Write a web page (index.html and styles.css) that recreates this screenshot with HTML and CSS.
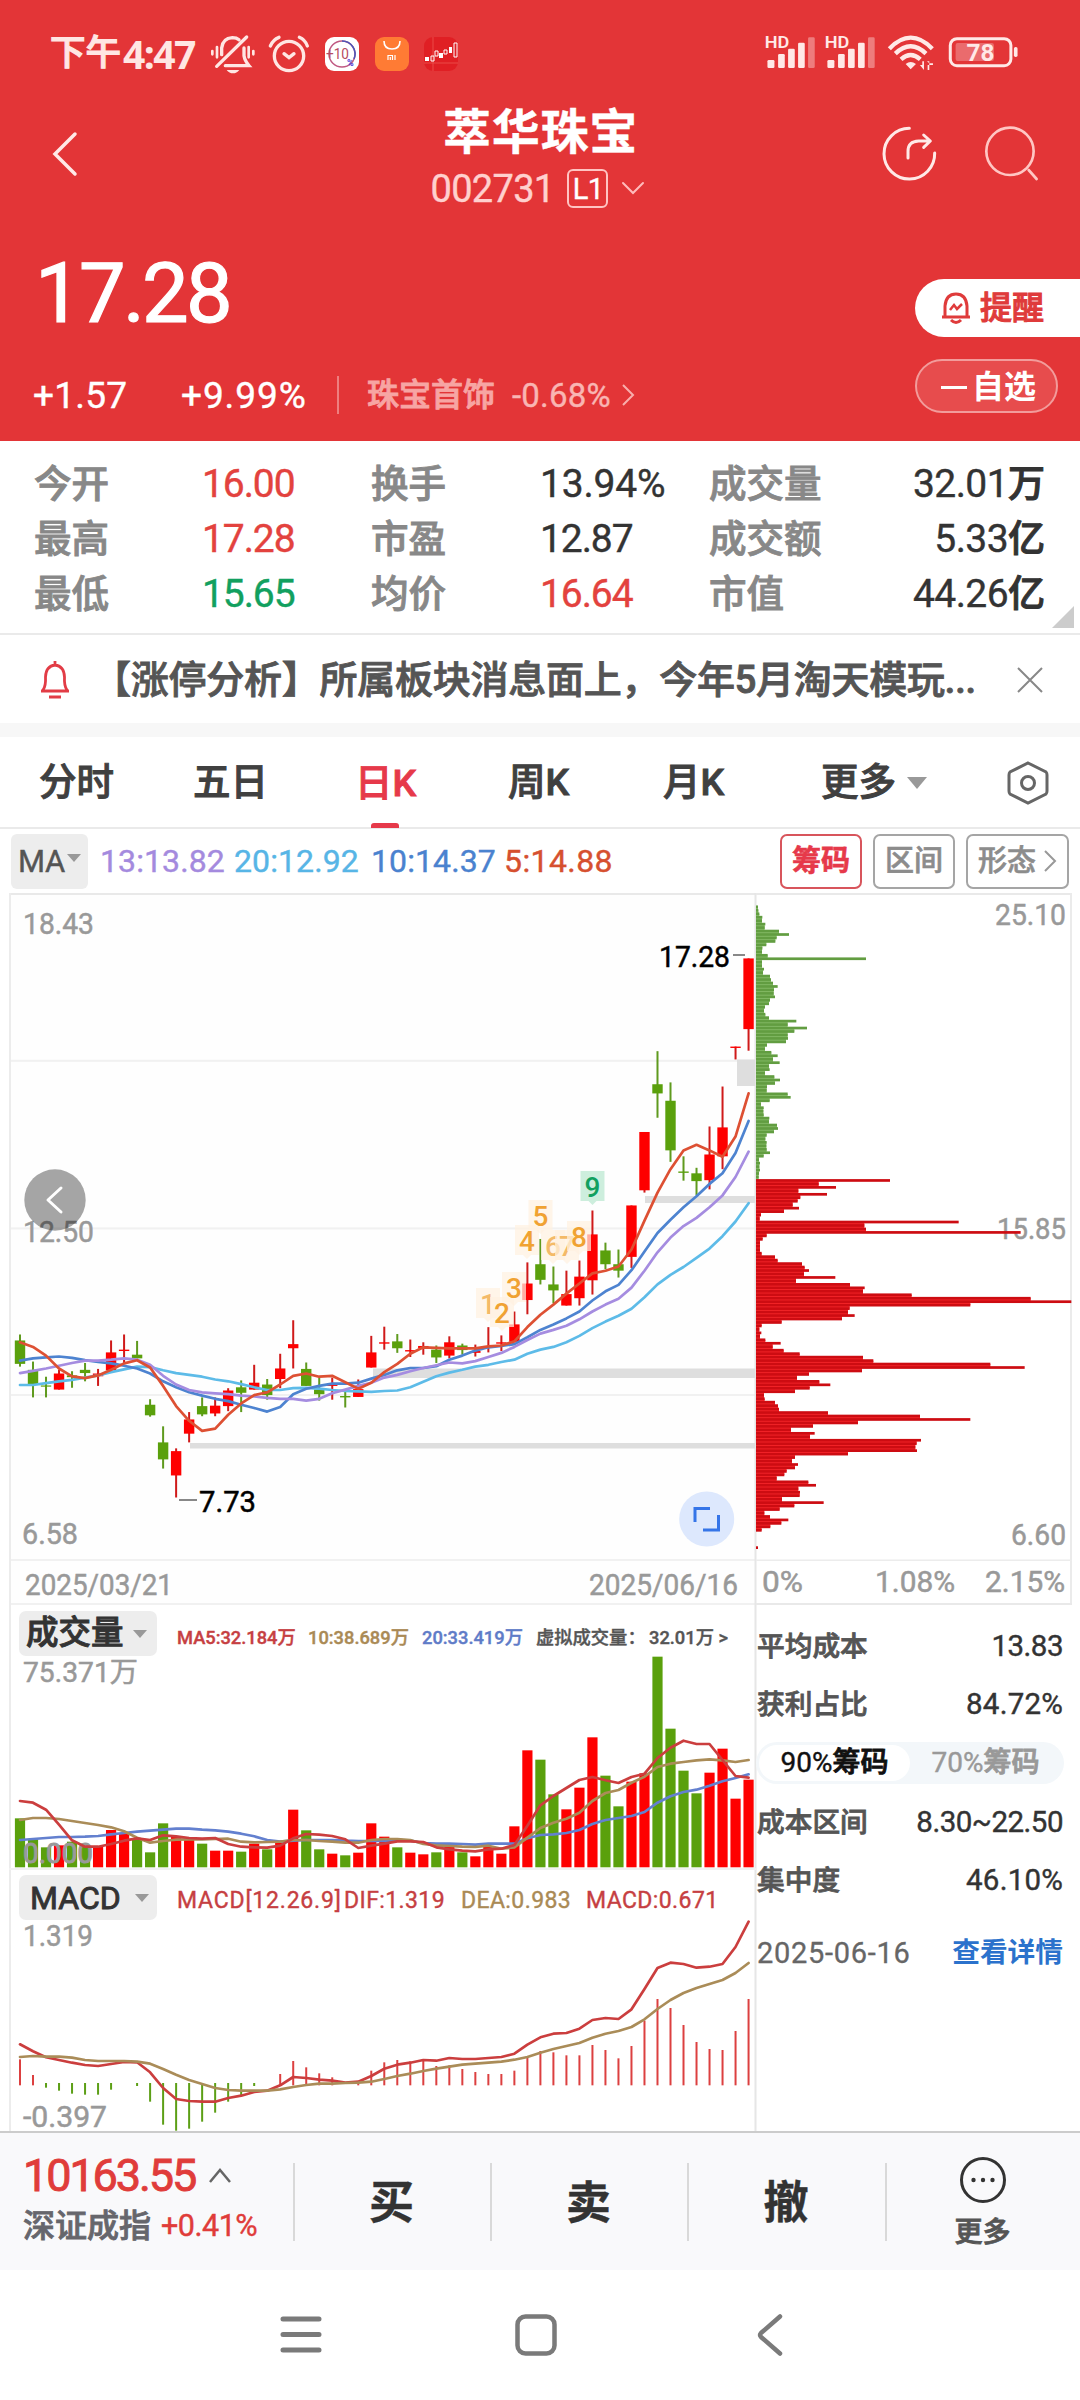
FILE: index.html
```html
<!DOCTYPE html>
<html lang="zh-CN">
<head>
<meta charset="utf-8">
<title>萃华珠宝 002731</title>
<link rel="stylesheet" href="styles.css">
</head>
<body>
<header class="hero">
  <div class="status">
    <span class="clock">下午<b>4:47</b></span>
    <svg class="st-bell" viewBox="510 40 138 125" width="46" height="41.7"><g fill="none" stroke="#ffe6e3" stroke-width="10" stroke-linecap="round"><path d="M530 140 620 52M545 105V85Q548 56 577 54Q590 54 597 60M612 85V108Q614 122 627 138H556"/><path d="M517 94V104M531 82V113M626 82V113M640 94V104" stroke-width="8"/></g><path d="M560 151H598Q590 161 579 161Q568 161 560 151Z" fill="#ffe6e3"/></svg>
    <svg class="st-alarm" viewBox="688 40 122 120" width="40.7" height="40"><g fill="none" stroke="#ffe6e3" stroke-width="10" stroke-linecap="round"><circle cx="748" cy="106" r="44"/><path d="M692 76Q700 57 718 50M803 76Q796 57 779 50M733 99 748 111 763 99"/></g></svg>
    <svg class="st-app" viewBox="0 0 34 34" width="34" height="34"><rect width="34" height="34" rx="9" fill="#fff"/><circle cx="17" cy="17" r="13" fill="none" stroke="#c05a83" stroke-width="1.5"/><path d="M17 4A13 13 0 0 1 29 22" fill="none" stroke="#4b55b8" stroke-width="1.5"/><text x="1" y="22" font-size="14" fill="#b64b62" textLength="23" lengthAdjust="spacingAndGlyphs">+10</text><text x="22" y="29" font-size="9" font-weight="700" fill="#4736d8">%</text></svg>
    <svg class="st-app" viewBox="0 0 34 34" width="34" height="34"><rect width="34" height="34" rx="9" fill="#ff7b34"/><path d="M9 4Q9 12 17 12Q25 12 25 4" fill="none" stroke="#fff" stroke-width="1.6"/><path d="M13 23V18.500H17.500V23M15.300 20V23M20 18V23" fill="none" stroke="#fff" stroke-width="1.200"/></svg>
    <svg class="st-app" viewBox="0 0 34 34" width="34" height="34"><rect width="34" height="34" rx="9" fill="#e01f24"/><path d="M9 0V34M0 26H34" stroke="#ee5550" stroke-width=".8"/><path d="M1 20H5V24H1ZM15 16H19V21H15ZM25 10H28V16H25Z" fill="#fff"/><path d="M7 19H10V24H7ZM11 14H14V19H11ZM20 13H23V17H20ZM30 6H33V20H30Z" fill="none" stroke="#fff" stroke-width="1"/></svg>
    <svg class="st-right" viewBox="72 45 768 115" width="256" height="38.300">
      <g fill="#ffe9e7"><g id="sig"><text x="74" y="91" font-size="50" font-weight="600" textLength="74" lengthAdjust="spacingAndGlyphs">HD</text><rect x="82" y="126" width="21" height="24" rx="4"/><rect x="114" y="108" width="20" height="42" rx="4"/><rect x="144" y="92" width="20" height="58" rx="4"/><rect x="174" y="74" width="20" height="76" rx="4"/><rect x="204" y="58" width="20" height="92" rx="4" opacity=".4"/></g><use href="#sig" x="180"/></g>
      <g fill="none" stroke="#ffe9e7" stroke-width="13"><path d="M448 92Q512 26 577 92M466 107Q512 63 558 107M483 124Q512 98 541 124"/></g>
      <path d="M497 138Q512 126 528 138L512 154ZM540 141H547V130H552V156ZM561 130H568V156H563V141H579V136H568ZM561 130" fill="#ffe9e7"/>
      <rect x="631" y="62" width="182" height="81" rx="20" fill="none" stroke="#ffe9e7" stroke-width="9"/><rect x="647" y="75" width="115" height="54" rx="6" fill="#fff" opacity=".27"/><rect x="822" y="87" width="11" height="30" rx="5" fill="#ffe9e7"/><text x="680" y="129" font-size="70" font-weight="700" fill="#ffe9e7" textLength="84" lengthAdjust="spacingAndGlyphs">78</text>
    </svg>
  </div>
  <div class="nav">
    <svg class="back" viewBox="0 0 28 46" width="28" height="46"><path d="M24 3 4 23 24 43" class="wline"/></svg>
    <div class="title"><h1>萃华珠宝</h1><div class="code"><span>002731</span><i>L1</i><svg viewBox="0 0 24 16" width="24" height="16"><path d="M2 2 12 12 22 2" class="wline thin"/></svg></div></div>
    <svg class="share" viewBox="422 316 170 170" width="56.700" height="56.700"><g fill="none" stroke="#ffe9e7" stroke-width="9" stroke-linecap="round" stroke-linejoin="round"><path d="M507 326A76 76 0 1 0 583 400M503 415V395Q503 365 535 364H568M550 346 570 364 550 383"/></g></svg>
    <svg class="search" viewBox="734 316 166 170" width="55.300" height="56.700"><g fill="none" stroke="#ffc6c3" stroke-width="8" stroke-linecap="round"><circle cx="812" cy="395" r="71"/><path d="M868 451 892 478"/></g></svg>
  </div>
  <div class="price-area">
    <div class="price">17.28</div>
    <div class="pills">
      <div class="pill remind"><svg viewBox="0 0 32 34" width="32" height="34"><path d="M2 26H30M5 25V15Q6 3 16 3Q26 3 27 15V25M11 29Q16 34 21 29" fill="none" stroke="#df3b3b" stroke-width="3"/><path d="M10 19 14 14 17 18 22 13" fill="none" stroke="#df3b3b" stroke-width="2.500"/></svg>提醒</div>
      <div class="pill watch"><s></s>自选</div>
    </div>
  </div>
  <div class="change"><span class="c1">+1.57</span><span class="c2">+9.99%</span><span class="sector">珠宝首饰</span><span class="sp">-0.68%</span><svg viewBox="0 0 14 24" width="14" height="24"><path d="M2 2 12 12 2 22" fill="none" stroke="#f8aeac" stroke-width="2"/></svg></div>
</header>

<section class="stats">
  <span>今开</span><b class="up">16.00</b><span>换手</span><b class="pct">13.94%</b><span>成交量</span><b class="r">32.01<em>万</em></b>
  <span>最高</span><b class="up">17.28</b><span>市盈</span><b>12.87</b><span>成交额</span><b class="r">5.33<em>亿</em></b>
  <span>最低</span><b class="down">15.65</b><span>均价</span><b class="up">16.64</b><span>市值</span><b class="r">44.26<em>亿</em></b>
  <svg class="corner" viewBox="0 0 22 22" width="22" height="22"><path d="M22 0V22H0Z" fill="#ccc"/></svg>
</section>

<section class="news">
  <svg viewBox="0 0 32 40" width="32" height="40"><g fill="none" stroke="#e23c46" stroke-width="2.800"><path d="M2 31H30M4 30Q7 26 6.500 17Q7 6 16 5Q25 6 25.500 17Q25 26 28 30M16 1V5M10 37H22"/></g></svg>
  <p>【涨停分析】所属板块消息面上，今年5月淘天模玩...</p>
  <svg viewBox="0 0 26 26" width="26" height="26"><path d="M1 1 25 25M25 1 1 25" stroke="#888" stroke-width="2"/></svg>
</section>

<nav class="tabs">
  <span>分时</span><span>五日</span><span class="on">日K</span><span>周K</span><span>月K</span><span class="more">更多<i></i></span>
  <svg viewBox="0 0 42 46" width="42" height="46"><g fill="none" stroke="#666" stroke-width="3"><path d="M21 3 39 12Q40 13 40 15V31Q40 33 39 34L21 43 3 34Q2 33 2 31V15Q2 13 3 12Z"/><circle cx="21" cy="23" r="6.500"/></g></svg>
</nav>

<div class="ma-row">
  <div class="ma-btn">MA<i></i></div>
  <div class="ma-legend"><span class="m13">13:13.82</span><span class="m20">20:12.92</span><span class="m10">10:14.37</span><span class="m5">5:14.88</span></div>
  <div class="modes"><span class="on">筹码</span><span>区间</span><span class="wide">形态<svg viewBox="0 0 14 24" width="14" height="24"><path d="M2 2 12 12 2 22" fill="none" stroke="#999" stroke-width="2"/></svg></span></div>
</div>

<main class="charts">
  <div class="left">
    <svg id="kline" viewBox="9 893 747 712" width="747" height="712"></svg>
    <div class="ind-head vol-head"><div class="ind-btn">成交量<i></i></div><div class="vol-legend"><span>MA5:32.184万</span><span>10:38.689万</span><span>20:33.419万</span><span>虚拟成交量：</span><span>32.01万 &gt;</span></div></div>
    <svg id="volume" viewBox="9 1657 747 212" width="747" height="212"></svg>
    <div class="ind-head macd-head"><div class="ind-btn lat">MACD<i></i></div><div class="macd-legend"><span>MACD[12.26.9]</span><span>DIF:1.319</span><span>DEA:0.983</span><span>MACD:0.671</span></div></div>
    <svg id="macd" viewBox="9 1921 747 210" width="747" height="210"></svg>
  </div>
  <div class="right">
    <svg id="chips" viewBox="756 893 324 712" width="324" height="712"></svg>
    <div class="chip-info">
      <div class="row"><span>平均成本</span><b>13.83</b></div>
      <div class="row"><span>获利占比</span><b class="pct">84.72%</b></div>
      <div class="toggle"><span class="on">90%<em>筹码</em></span><span>70%<em>筹码</em></span></div>
      <div class="row"><span>成本区间</span><b>8.30~22.50</b></div>
      <div class="row"><span>集中度</span><b class="pct">46.10%</b></div>
      <div class="row last"><span>2025-06-16</span><a>查看详情</a></div>
    </div>
  </div>
</main>

<footer class="trade">
  <div class="index"><div class="idx-top">10163.55<svg viewBox="0 0 24 16" width="24" height="16"><path d="M2 14 12 2 22 14" fill="none" stroke="#666" stroke-width="2.500"/></svg></div><div class="idx-bot">深证成指<span>+0.41%</span></div></div>
  <div class="act">买</div><div class="act">卖</div><div class="act">撤</div>
  <div class="act etc"><svg viewBox="0 0 48 48" width="48" height="48"><circle cx="24" cy="24" r="21.500" fill="none" stroke="#333" stroke-width="3"/><g fill="#333"><circle cx="14.500" cy="24" r="2.200"/><circle cx="24" cy="24" r="2.200"/><circle cx="33.500" cy="24" r="2.200"/></g></svg><span>更多</span></div>
</footer>
<div class="sysnav">
  <svg viewBox="0 0 40 42" width="40" height="42"><path d="M2 5H38M2 20.500H38M2 36H38" stroke="#7a7a7a" stroke-width="5" stroke-linecap="round"/></svg>
  <svg viewBox="0 0 42 42" width="42" height="42"><rect x="2.500" y="2.500" width="37" height="37" rx="8" fill="none" stroke="#7a7a7a" stroke-width="4.500"/></svg>
  <svg viewBox="0 0 26 42" width="26" height="42"><path d="M23 2.500 4 19Q2 21 4 23L23 39.500" fill="none" stroke="#7a7a7a" stroke-width="4.500" stroke-linecap="round"/></svg>
</div>
<script src="charts.js"></script>
</body>
</html>
```
FILE: styles.css
```css
* { box-sizing: border-box; margin: 0; padding: 0; }
body { width: 1080px; background: #fff; color: #333; font-family: Roboto, "Noto Sans CJK SC", sans-serif; line-height: 1; -webkit-text-stroke: .4px currentColor; }
svg { display: block; flex: none; overflow: visible; -webkit-text-stroke: 0; }
b, i, em, h1 { font-weight: inherit; font-style: normal; }
svg text { font-family: Roboto, "Noto Sans CJK SC", sans-serif; }
.wline { fill: none; stroke: #ffe9e7; stroke-width: 3.5; stroke-linecap: round; }
.wline.thin { stroke: #fbb; stroke-width: 2; }

.hero { height: 441px; background: #e33537; color: #fff; }
.status { height: 108px; display: flex; align-items: center; padding-left: 50px; }
.clock { width: 160px; font-size: 35.5px; font-weight: 500; color: #ffe6e3; white-space: nowrap; display: flex; align-items: center; -webkit-text-stroke: 1.2px currentColor; }
.clock b { font: 700 39px/1 "Open Sans", sans-serif; letter-spacing: -1.6px; margin-left: 2px; -webkit-text-stroke: 0; margin-top: -2px; }
.st-alarm { margin-left: 13px; }
.st-app { margin-left: 15.5px; }
.st-right { margin-left: auto; margin-right: 60px; margin-top: -3px; }

.nav { height: 110px; display: flex; align-items: flex-start; padding-left: 51px; }
.back { margin-top: 23px; }
.title { flex: 1; display: flex; flex-direction: column; align-items: center; padding-left: 114px; }
.title h1 { font-size: 48px; font-weight: 700; line-height: 48px; margin: 1px 0 0 7px; letter-spacing: .8px; }
.code { display: flex; align-items: center; gap: 13px; margin: 12px 0 0 2px; font-size: 38px; letter-spacing: -.7px; color: #ffd0ce; }
.code i { width: 41px; height: 39px; border: 2px solid #ffc4c2; border-radius: 6px; font-size: 29px; line-height: 36px; text-align: center; color: #fff; }
.share { margin: 17px 46px 0 0; }
.search { margin: 17px 41px 0 0; }

.price-area { height: 152px; display: flex; justify-content: space-between; }
.price { font-size: 83px; letter-spacing: -2.7px; padding: 34px 0 0 35px; -webkit-text-stroke-width: 1.2px; }
.pills { width: 165px; padding-top: 61px; display: flex; flex-direction: column; gap: 22px; }
.pill { display: flex; align-items: center; flex: none; font-size: 32px; font-weight: 500; }
.remind { height: 58px; border-radius: 29px 0 0 29px; background: #fff; color: #df3b3b; padding-left: 25px; gap: 8px; -webkit-text-stroke-width: 1px; }
.watch { height: 54px; width: 143px; border: 2px solid #f29c9b; border-radius: 27px; background: #e74c4d; padding-left: 24px; gap: 5px; font-weight: 700; padding-top: 2px; -webkit-text-stroke-width: 0; }
.watch s { width: 26px; height: 3px; background: #fff; }
.change { height: 50px; display: grid; grid-template-columns: 148px 158px 28px 145px 109px 14px; padding-left: 33px; align-items: center; font-size: 37px; letter-spacing: .2px; white-space: nowrap; }
.change .c2 { letter-spacing: .9px; }
.change .sector { grid-column: 4; font-size: 32px; letter-spacing: 0; color: #f7a5a3; font-weight: 500; -webkit-text-stroke-width: .9px; position: relative; }
.change .sector::before { content: ""; position: absolute; left: -30px; top: -3px; width: 2px; height: 38px; background: #ee7f7f; }
.change .sp { font-size: 33px; letter-spacing: .2px; color: #f9b5b3; }

.stats { height: 194px; border-bottom: 2px solid #eaeaea; position: relative; padding: 16px 35px 0 34px; display: grid; grid-template-columns: 168px 169px 169px 169px 136px 1fr; grid-auto-rows: 55px; align-items: center; font-size: 37.5px; color: #888; white-space: nowrap; }
.stats span { font-weight: 500; -webkit-text-stroke-width: .9px; }
.stats b { font-size: 39px; color: #333; letter-spacing: -1.1px; }
.stats b.pct { letter-spacing: -.2px; }
.stats b em { font-size: 37px; font-weight: 500; letter-spacing: 0; -webkit-text-stroke-width: 1px; }
.stats .up { color: #e3423e; }
.stats .down { color: #12a05f; }
.stats .r { text-align: right; letter-spacing: -.6px; }
.corner { position: absolute; right: 6px; bottom: 5px; }

.news { height: 88px; display: flex; align-items: center; padding: 2px 37px 0 39px; font-size: 38px; color: #555; }
.news p { flex: 1; margin-left: 22px; white-space: nowrap; font-weight: 500; letter-spacing: -.25px; -webkit-text-stroke-width: .9px; }
.tabs { height: 106px; border-top: 14px solid #f7f7f7; border-bottom: 2px solid #eaeaea; display: grid; grid-template-columns: 154px 162px 153px 155px 158px 186px 42px; padding: 2px 0 0 39px; align-items: center; font-size: 37.5px; font-weight: 500; color: #404040; white-space: nowrap; -webkit-text-stroke-width: .9px; }
.tabs .on { color: #e6394a; height: 88px; line-height: 88px; position: relative; }
.tabs .on::after { content: ""; position: absolute; left: 16px; bottom: -1px; width: 28px; height: 5px; border-radius: 3px 3px 0 0; background: #e6394a; }
.tabs .more { display: flex; align-items: center; }
.tabs .more i, .ma-btn i, .ind-btn i { border: 10px solid transparent; border-top: 12px solid #999; border-bottom: 0; margin-left: 11px; }

.ma-row { height: 64px; display: flex; align-items: center; padding: 0 11px; }
.ma-btn { width: 77px; height: 55px; background: #ededed; border-radius: 6px; display: flex; align-items: center; font-size: 31px; letter-spacing: -.4px; color: #555; padding-left: 7px; }
.ma-btn i { border-width: 8px 7px 0; margin: -6px 0 0 2px; }
.ma-legend { display: grid; grid-template-columns: 134px 137px 133px 110px; padding-left: 12px; font-size: 32px; letter-spacing: .1px; }
.m13 { color: #a48ade; } .m20 { color: #57b5e6; } .m10 { color: #4a82cf; } .m5 { color: #d6502f; letter-spacing: .4px; }
.modes { margin-left: auto; display: flex; gap: 11px; font-size: 29px; color: #8c8c8c; }
.modes span { width: 82px; height: 55px; border: 2px solid #a5a5a5; border-radius: 7px; display: flex; align-items: center; justify-content: center; gap: 7px; font-weight: 500; -webkit-text-stroke-width: .6px; }
.modes .on { color: #e6394a; border-color: #d8555c; font-weight: 700; }
.modes .wide { width: 103px; }

.charts { height: 1238px; display: flex; padding-left: 9px; }
.left { width: 747px; }
.right { width: 324px; }
.ind-head { height: 52px; display: flex; padding: 6px 0 0 10px; }
.ind-btn { width: 138px; height: 45px; border-radius: 7px; background: #ededed; display: flex; align-items: center; padding-left: 7px; font-size: 32.5px; font-weight: 500; color: #333; white-space: nowrap; -webkit-text-stroke-width: .9px; }
.ind-btn i { border-width: 8px 7px 0; margin-left: 9px; }
.ind-btn.lat { padding-left: 11px; font-weight: 400; font-size: 32px; letter-spacing: 0; }
.ind-btn.lat i { margin-left: 14px; }
.vol-legend { display: grid; grid-template-columns: 131px 114px 114px 113px 80px; margin-left: 20px; padding-top: 18px; font-size: 18.3px; font-weight: 500; white-space: nowrap; color: #555; }
.vol-legend span:nth-child(1), .macd-legend span { color: #c63f42; }
.vol-legend span:nth-child(2) { color: #aa8a55; }
.vol-legend span:nth-child(3) { color: #5f7cc8; }
.macd-legend { display: grid; grid-template-columns: 167px 117px 125px 130px; margin-left: 20px; padding-top: 14px; font-size: 23px; white-space: nowrap; letter-spacing: .4px; }
.macd-legend span:nth-child(1) { letter-spacing: .8px; }
.macd-legend span:nth-child(3) { color: #aa8a55; }
.chip-info { display: flex; flex-direction: column; padding: 13px 17px 0 1px; }
.row { height: 58px; display: flex; justify-content: space-between; align-items: center; font-size: 27.7px; font-weight: 500; color: #555; white-space: nowrap; -webkit-text-stroke-width: .8px; }
.row b { font-size: 29.500px; font-weight: 400; letter-spacing: -.5px; color: #333; -webkit-text-stroke-width: .4px; }
.row b.pct { letter-spacing: .2px; }
.row.last { height: 66px; margin-top: 10px; }
.row.last span { font-weight: 400; font-size: 29px; letter-spacing: .7px; color: #666; -webkit-text-stroke-width: .3px; }
.row a { color: #2b72cc; font-weight: 700; -webkit-text-stroke-width: 0; }
.toggle { height: 42px; margin: 8px 0 10px -1px; width: 308px; border-radius: 21px; background: #f3f7fa; display: flex; padding: 3px; font-size: 28px; letter-spacing: 0; color: #999; }
.toggle span { flex: 1; display: flex; align-items: center; justify-content: center; border-radius: 18px; }
.toggle em { letter-spacing: 0; font-weight: 500; -webkit-text-stroke-width: .9px; }
.toggle .on { background: #fff; color: #111; }

.trade { height: 139px; background: #f9f9fb; border-top: 2px solid #ccc; display: grid; grid-template-columns: 293px 197px 197px 198px 195px; }
.index { padding: 20px 0 0 23px; }
.idx-top { display: flex; align-items: center; gap: 13px; font-size: 45px; letter-spacing: -2.1px; color: #e03c3a; -webkit-text-stroke-width: .9px; }
.idx-bot { display: flex; align-items: center; margin-top: 12px; font-size: 32px; font-weight: 500; color: #66666c; white-space: nowrap; -webkit-text-stroke-width: .8px; }
.idx-bot span { font-size: 30.500px; font-weight: 400; letter-spacing: -.5px; margin-left: 10px; color: #e03c3a; -webkit-text-stroke-width: .4px; }
.act { display: flex; align-items: center; justify-content: center; padding-top: 3px; font-size: 45px; font-weight: 700; color: #333; background: linear-gradient(#d9d9d9, #d9d9d9) left 30px / 2px 78px no-repeat; }
.etc { flex-direction: column; gap: 15px; padding-top: 0; font-size: 28px; font-weight: 500; color: #555; -webkit-text-stroke-width: .8px; }
.sysnav { height: 130px; display: flex; align-items: flex-start; padding: 44px 0 0 281px; }
.sysnav svg + svg { margin-left: 194px; }
.sysnav svg:last-child { margin-left: 200px; }
```
FILE: charts.js
```js
const NS = 'http://www.w3.org/2000/svg';
const RED = '#fe0000', GREEN = '#5aa00c';
const X = i => 20 + 13.01 * i;

function add(svg, tag, attrs, text) {
  const el = document.createElementNS(NS, tag);
  for (const k in attrs) el.setAttribute(k, attrs[k]);
  if (text) el.textContent = text;
  svg.appendChild(el);
  return el;
}
const rect = (s, x, y, w, h, fill, rx) => add(s, 'rect', { x, y, width: w, height: h, fill, rx: rx || 0 });
const path = (s, d, stroke, w) => add(s, 'path', { d, stroke, 'stroke-width': w, fill: 'none', 'stroke-linejoin': 'round', 'stroke-linecap': 'round' });
const label = (s, t, x, y, len, fill, size) =>
  add(s, 'text', { x, y, textLength: len, lengthAdjust: 'spacingAndGlyphs', fill, stroke: fill, 'stroke-width': .5, 'font-size': size || 30 }, t);
function series(s, data, map, color, w) {
  path(s, 'M' + data.map((v, i) => X(i).toFixed(1) + ' ' + map(v).toFixed(1)).join('L'), color, w || 2.7);
}

/* Daily candles: [colour, high, body top, body bottom, low] */
const K = document.getElementById('kline');
const ky = v => 890 + v / 2.1778;
const candles = `G968 981 1032 1038,G1027 1045 1078 1105,G1060 1079 1081 1105,R1045 1053 1088 1088,G1048 1057 1061 1084,G1030 1045 1052 1070,R1043 1053 1059 1080,R981 1007 1046 1046,R968 1001 1004 1030,G982 1012 1020 1020,G1109 1121 1144 1147,G1168 1203 1240 1260,R1216 1222 1275 1323,R1137 1153 1184 1203,G1105 1124 1142 1146,R1105 1123 1140 1146,R1085 1090 1124 1135,G1068 1083 1095 1137,R1034 1073 1088 1088,G1065 1077 1100 1110,R1010 1042 1065 1085,R937 989 998 1042,G1029 1043 1080 1080,G1062 1088 1098 1112,R1062 1077 1080 1110,G1092 1102 1105 1127,R1066 1087 1104 1104,R971 1007 1040 1040,R951 985 988 1001,G967 983 998 1008,R979 1002 1005 1017,R985 993 998 1012,G992 1001 1018 1030,R972 985 1014 1020,G988 992 1002 1012,R990 1004 1008 1016,R952 993 996 1007,R970 985 988 1004,R918 946 984 984,R811 857 893 924,G760 815 849 859,G820 859 872 900,R829 880 905 905,R807 842 889 905,R698 750 850 881,G768 785 815 826,G783 815 829 844,R687 687 799 823,R527 527 654 659,G351 423 443 496,G419 459 567 592,G580 613 616 633,G605 617 634 665,R515 576 632 652,R428 517 580 608,R341 341 344 369,R149 149 303 350`.split(',');
rect(K, 9, 893, 747, 712, '#fefefe');
for (const y of [1060.8, 1228.4, 1395, 1560, 1604]) rect(K, 9, y - 1, 747, 2, '#f1f1f1');
rect(K, 9, 893, 747, 2, '#e9e9e9');
rect(K, 9, 893, 2, 1238, '#ececec');
rect(K, 754.5, 893, 2, 1238, '#e6e6e6');
label(K, '12.50', 23, 1242, 71, '#999');
rect(K, 190, 1443, 565, 5.5, '#dedede');
rect(K, 373, 1368.500, 382, 9.500, '#dedede');
rect(K, 645, 1196, 110, 7, '#dedede');
rect(K, 737, 1059.500, 18, 26.500, '#dedede');
candles.forEach((c, i) => {
  const up = c[0] === 'R', [h, t, b, l] = c.slice(1).split(' ').map(Number);
  rect(K, X(i) - 1, ky(h), 2, ky(l) - ky(h), up ? '#cf1a1a' : '#5f9a1e');
  rect(K, X(i) - 5.2, ky(t), 10.4, Math.max(1.2, ky(b) - ky(t)), up ? RED : GREEN);
});
series(K, [1078,1078,1074,1070,1067,1062,1057,1050,1044,1038,1039,1046,1052,1056,1060,1066,1070,1076,1083,1089,1089,1085,1084,1086,1089,1091,1092,1093,1091,1090,1083,1071,1059,1051,1045,1038,1034,1028,1023,1010,1001,995,985,971,954,940,927,912,887,859,838,821,801,781,754,722,682], ky, '#5dbbe8');
series(K, [1025,1020,1018,1016,1019,1024,1028,1031,1036,1042,1053,1070,1083,1094,1101,1108,1113,1121,1128,1136,1126,1098,1086,1080,1075,1075,1073,1064,1056,1046,1041,1041,1037,1023,1014,1003,996,993,989,974,958,946,933,918,894,874,860,828,787,747,718,691,667,640,617,573,503], ky, '#4d83d0');
series(K, [1052,1047,1042,1036,1030,1025,1025,1023,1020,1023,1034,1058,1077,1089,1094,1096,1098,1101,1103,1106,1108,1108,1112,1108,1096,1088,1080,1073,1062,1056,1048,1041,1035,1029,1031,1026,1017,1008,995,980,966,958,949,935,918,903,890,866,829,789,757,732,714,691,665,625,570], ky, '#a58ce0');
series(K, [985,995,1014,1042,1059,1063,1057,1045,1031,1024,1040,1080,1124,1156,1178,1173,1143,1118,1100,1094,1077,1058,1053,1060,1058,1072,1086,1073,1050,1032,1010,996,997,998,998,998,994,992,983,952,925,903,879,857,835,829,820,783,720,659,608,567,555,567,581,537,443], ky, '#dd5033');

/* Sequence markers above the candles */
for (const [n, x, top] of [[1, 488, 1294], [2, 502, 1303], [3, 514, 1278], [4, 527, 1231], [6, 553, 1236], [7, 567, 1236], [5, 540.5, 1206], [8, 579, 1227], [9, 592.500, 1177]]) {
  add(K, 'path', { d: `M${x - 12} ${top - 6}h24v30h-8l-4 4-4-4h-8z`, fill: n === 9 ? '#cdeedd' : '#fff1e0', opacity: n === 9 ? 1 : .72 });
  const t = add(K, 'text', { x, y: top + 20, 'font-size': 28, 'text-anchor': 'middle', 'font-weight': 500, fill: n === 9 ? '#12a05f' : '#f0a232' }, String(n));
  if (n === 1 || n === 6 || n === 7) t.setAttribute('opacity', .7);
}
label(K, '18.43', 23, 934, 71, '#999');
label(K, '6.58', 22, 1544, 56, '#999');
label(K, '7.73', 199, 1512, 57, '#000');
rect(K, 179, 1499, 18, 2, '#888');
label(K, '17.28', 659, 967, 71, '#000');
rect(K, 733, 954, 12, 2, '#888');
label(K, '2025/03/21', 25, 1595, 148, '#999');
label(K, '2025/06/16', 589, 1595, 149, '#999');
add(K, 'circle', { cx: 55, cy: 1200, r: 30.7, fill: '#000', opacity: .35 });
path(K, 'M61 1188 48 1200 61 1212', '#fff', 3);
add(K, 'circle', { cx: 706.700, cy: 1519, r: 27.500, fill: '#dde8fd' });
add(K, 'path', { d: 'M695 1522V1508.500H710M718.500 1515V1530H703', fill: 'none', stroke: '#3575e8', 'stroke-width': 3 });

/* Volume */
const V = document.getElementById('volume');
const vy = v => 1600 + v / 3;
const vols = 'G655 G718 G742 R736 G725 G740 R738 R690 R700 G720 G757 G670 R708 R718 G731 R752 R752 G755 R731 G748 R728 R629 G691 G748 R761 G766 R758 R670 R710 G742 R758 R763 G757 R740 G757 R769 R740 R761 R679 R451 G479 G583 R628 R563 R412 G527 G619 R545 R520 G170 G386 G512 G580 R518 R446 R596 R539'.split(' ');
vols.forEach((v, i) => rect(V, X(i) - 5.100, vy(+v.slice(1)), 10.2, 1867.3 - vy(+v.slice(1)), v[0] === 'R' ? RED : GREEN));
label(V, '0.000', 23, 1863, 70, '#999', 28).setAttribute('stroke-width', 1);
label(V, '75.371万', 23, 1682, 115, '#999', 28);
rect(V, 9, 1868, 747, 2, '#f1f1f1');
series(V, [720,717,714,711,711,710,708,703,699,695,692,689,686,686,689,691,695,701,709,720,725,722,720,720,720,722,723,723,723,722,722,729,731,731,732,734,731,731,731,715,705,703,699,690,672,660,654,648,636,608,589,576,569,557,544,534,523], vy, '#6380cf', 2.7);
series(V, [660,654,654,657,663,669,675,682,694,713,728,723,719,718,718,717,716,725,727,726,725,720,720,723,725,728,728,720,717,717,720,732,736,738,740,741,737,746,742,713,684,668,656,638,603,579,570,548,530,501,491,486,481,478,481,486,480], vy, '#aa8c58', 2.7);
series(V, [603,608,629,674,721,740,740,732,722,715,720,706,709,714,716,714,732,740,742,743,737,715,702,704,708,718,744,737,731,724,724,726,742,748,752,754,748,746,735,677,616,588,564,540,531,541,549,531,521,474,443,422,432,432,480,528,533], vy, '#cb3e3e', 2.7);

/* MACD */
const M = document.getElementById('macd');
const my = v => 1860 + v / 3;
[598,645,683,692,701,704,704,689,0,678,725,794,812,806,785,758,725,707,678,0,642,603,622,640,652,0,664,632,607,600,604,600,618,616,627,636,642,642,632,594,573,577,586,586,555,570,595,558,482,417,444,495,546,567,570,513,417].forEach((v, i) => {
  if (!v) return;
  const up = v < 672;
  rect(M, X(i) - 1, up ? my(v) : my(669), 2, up ? (676 - v) / 3 : (v - 669) / 3, up ? '#dc4040' : '#5c9f16');
});
series(M, [553,574,592,600,608,615,618,612,606,607,637,684,717,723,725,725,714,707,696,692,676,651,654,659,662,668,665,648,626,614,608,600,602,594,597,597,594,591,581,554,532,521,519,506,480,474,477,448,387,324,308,312,323,320,312,261,185], my, '#cb3e3e', 2.7);
series(M, [591,588,590,590,593,600,603,603,603,605,611,627,644,660,672,684,690,692,692,692,688,681,675,671,671,669,668,665,657,648,641,633,626,620,614,611,608,605,599,591,578,567,558,549,533,521,513,501,478,447,420,399,384,372,360,339,309], my, '#aa8c58', 2.7);
label(M, '1.319', 23, 1946, 70, '#999', 29);
label(M, '-0.397', 23, 2127, 84, '#999', 29);

/* Chip distribution, one bar per price step */
const C = document.getElementById('chips');
const chips = [6,7,10,19,18,28,26,69,99,62,58,31,19,18,35,330,18,18,24,21,42,45,51,65,54,53,57,42,39,27,24,28,39,121,95,153,115,95,96,90,33,27,46,65,51,71,39,41,27,55,72,57,33,32,95,104,41,15,23,22,23,40,39,63,66,54,32,28,32,31,32,42,23,9,12,10,12,9,8,
402,188,240,127,213,133,125,110,129,84,15,11,608,325,330,794,32,20,12,12,12,17,57,65,138,146,159,144,238,120,282,326,321,467,824,946,643,281,276,296,258,77,17,10,16,12,28,74,50,83,131,321,352,703,806,318,159,123,190,223,161,117,24,26,57,66,69,216,492,643,306,171,105,176,162,495,482,478,483,276,117,108,126,117,92,85,62,157,180,127,132,131,78,203,115,71,25,42,97,76,43,17,0,0,0,0,6];
rect(C, 756, 893, 316, 2, '#e9e9e9');
rect(C, 1070, 893, 2, 712, '#ebebeb');
rect(C, 756, 1559.500, 316, 1.500, '#ececec');
rect(C, 756, 1603, 316, 2, '#e9e9e9');
label(C, '25.10', 995, 925, 71, '#999');
label(C, '15.85', 997, 1239, 69, '#999');
label(C, '6.60', 1011, 1545, 55, '#999');
label(C, '0%', 762, 1592, 41, '#999');
label(C, '1.08%', 875, 1592, 80, '#999');
label(C, '2.15%', 985, 1592, 80, '#999');
/* pale underlay shows between neighbouring bars */
chips.forEach((w, i) => {
  const next = Math.min(w, chips[i + 1] || 0), y = 906.8 + i * 3.464;
  if (next) rect(C, 756, y, next / 3, 3.464, i < 79 ? '#8cc06e' : '#fb2a2e');
});
chips.forEach((w, i) => {
  const y = 906.8 + i * 3.464;
  if (w) rect(C, 756, y - 1.350, w / 3, 2.7, i < 79 ? '#629d41' : '#cd0c12');
});
```
